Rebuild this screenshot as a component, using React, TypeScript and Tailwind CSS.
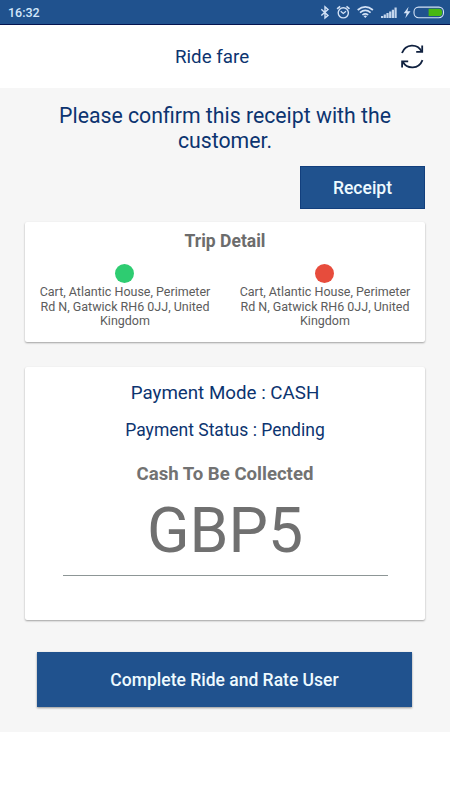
function StatusIcons() {
  return (
    <svg width="130" height="24" viewBox="0 0 130 24" fill="none" stroke="#d3e2f6" aria-hidden="true">
      {/* Bluetooth */}
      <path d="M1.3 9.3 L8 15.4 L5 18 V6.8 L8 9.4 L1.3 15.6" strokeWidth="1.4" />
      {/* Alarm */}
      <circle cx="23.3" cy="12.8" r="5.1" strokeWidth="1.4" />
      <path d="M20.7 11.3 L23.3 13.5 L26 11.3" strokeWidth="1.3" />
      <path d="M17.1 8.8 L20.1 6.3 M29.5 8.8 L26.5 6.3" strokeWidth="1.6" />
      {/* Wifi */}
      <path d="M37.7 10 Q45.3 3.8 52.9 10" strokeWidth="1.7" />
      <path d="M40 12.6 Q45.3 8.2 50.6 12.6" strokeWidth="1.7" />
      <path d="M42.4 15 Q45.3 12.6 48.2 15" strokeWidth="1.6" />
      <path d="M43.5 16.1 Q45.3 14.9 47.1 16.1 L45.3 18 Z" fill="#d3e2f6" stroke="none" />
      {/* Signal */}
      <path
        d="M61 18 V16 H63.2 V18 Z M63.7 18 V14.6 H65.9 V18 Z M66.4 18 V13.1 H68.6 V18 Z M69.1 18 V11.5 H71.3 V18 Z M71.8 18 V9.7 H74 V18 Z M74.5 18 V7.5 H76.7 V18 Z"
        fill="#c4d6ed"
        stroke="none"
      />
      {/* Charging */}
      <path d="M88.6 6.8 L83.7 13.2 H86.6 L85.3 18.3 L90.5 11.3 H87.4 Z" fill="#d3e2f6" stroke="none" />
      {/* Battery */}
      <rect x="94" y="7.1" width="29.5" height="10.6" rx="4.6" strokeWidth="1.1" />
      <path d="M108.6 8.7 H119.3 Q122.2 8.9 122.2 12.4 Q122.2 15.9 119.3 16.1 H108.6 Z" fill="#48b813" stroke="none" />
    </svg>
  )
}

function RefreshIcon() {
  return (
    <svg width="24" height="26" viewBox="0 0 24 26" fill="none" stroke="#10213f" strokeWidth="1.8" aria-hidden="true">
      <path d="M2 9 C5.5 -0.6 17.5 -0.6 21.5 7.2" />
      <path d="M22.2 1.6 V7.9 H16.2" />
      <path d="M22.5 16.2 C18.8 25.6 7 25.6 2.8 17.8" />
      <path d="M2.1 23.6 V17.3 H8.2" />
    </svg>
  )
}

function Stop({ color }: { color: string }) {
  return (
    <div className="flex w-[200px] flex-col items-center">
      <div className={`mr-px size-[19px] rounded-full ${color}`} />
      <p className="mt-[2px] w-[180px] text-center text-[12.5px] leading-[14.6px] text-[#5c5c5c]">
        Cart, Atlantic House, Perimeter Rd N, Gatwick RH6 0JJ, United Kingdom
      </p>
    </div>
  )
}

export default function App() {
  return (
    <div className="flex h-[800px] w-[450px] flex-col bg-white font-[Roboto,sans-serif] text-[#0c3470]">
      {/* Status bar */}
      <div className="flex h-[25px] shrink-0 justify-between border-b border-[#04144f] bg-[#20528e] pl-[8px]">
        <span className="text-[12.5px] leading-[26px] font-medium text-[#d3e7fb]">16:32</span>
        <StatusIcons />
      </div>

      {/* Header */}
      <header className="flex h-[63px] shrink-0 items-center justify-between pr-[26px] pl-[175px]">
        <h1 className="pt-[2px] text-[18.75px]">Ride fare</h1>
        <button type="button" aria-label="Refresh">
          <RefreshIcon />
        </button>
      </header>

      <main className="flex h-[644px] flex-col bg-[#f6f6f6] px-[25px] pt-[15px]">
        <p className="text-center text-[21.25px] leading-[25px]">Please confirm this receipt with the customer.</p>
        <button
          type="button"
          className="mt-[13px] h-[43px] w-[125px] shrink-0 self-end border border-[#123f7d] bg-[#20528e] pt-[2px] text-[17.5px] font-medium text-[#eefaff]"
        >
          Receipt
        </button>

        {/* Trip */}
        <section className="mt-[13px] h-[120px] shrink-0 rounded-[2px] bg-white pt-[8px] shadow-[0_1px_2px_rgba(0,0,0,0.35)]">
          <h2 className="text-center text-[17.5px] leading-[22px] font-bold text-[#6c6c6c]">Trip Detail</h2>
          <div className="mt-[12px] flex">
            <Stop color="bg-[#2ecc71]" />
            <Stop color="bg-[#e74c3c]" />
          </div>
        </section>

        {/* Payment */}
        <section className="mt-[25px] flex h-[253px] shrink-0 flex-col items-center rounded-[2px] bg-white pt-[15px] shadow-[0_1px_2px_rgba(0,0,0,0.35)]">
          <p className="text-[18.75px] leading-[22px]">Payment Mode : CASH</p>
          <p className="mt-[16px] text-[17.5px] leading-[21px]">Payment Status : Pending</p>
          <h2 className="mt-[22px] text-[18.6px] leading-[22px] font-bold text-[#727272]">Cash To Be Collected</h2>
          <p className="mt-[10px] text-[62.5px] leading-[72px] text-[#707070]">GBP5</p>
          <hr className="mt-[8px] w-[325px] border-[#8d9696]" />
        </section>

        <button
          type="button"
          className="mr-[13px] ml-[12px] mt-[32px] h-[55px] shrink-0 bg-[#20528e] pt-[2px] text-[17.5px] font-medium text-[#eefaff] shadow-[0_1px_2px_rgba(0,0,0,0.4)]"
        >
          Complete Ride and Rate User
        </button>
      </main>
    </div>
  )
}
